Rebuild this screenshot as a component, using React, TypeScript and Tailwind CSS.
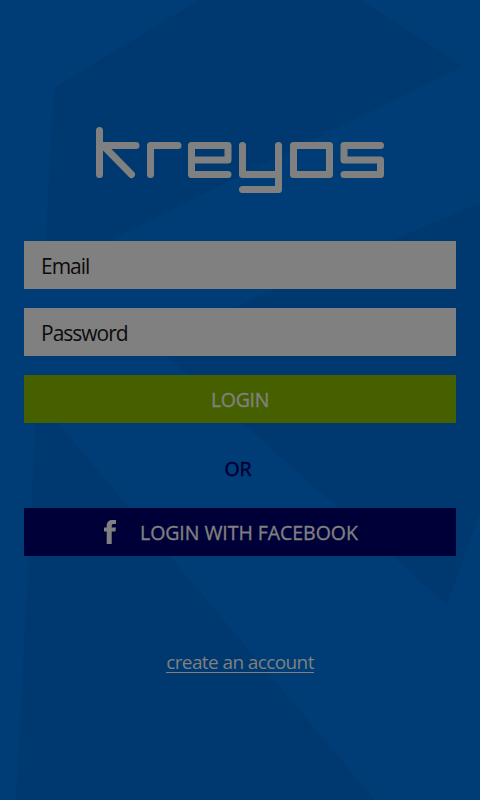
import React from "react";

const field =
  "h-12 w-full bg-[#808080] px-[17px] pt-px text-[21px] text-[#0c0c0c] placeholder-[#0c0c0c] outline-none tracking-[-1px]";

function Backdrop() {
  return (
    <svg className="absolute inset-0 -z-10" width="480" height="800" viewBox="0 0 480 800" aria-hidden="true">
      <rect width="480" height="800" fill="#003d76" />
      <g fill="#00396f">
        <path d="M199 0H361L463 66L114 238L44 272L54 88Z" />
        <path d="M480 203L393 240L151 342L447 605L480 512Z" />
        <path d="M37 398L375 800H16Z" />
      </g>
    </svg>
  );
}

function Logo() {
  return (
    <svg
      className="h-[67px] w-[290px]"
      viewBox="95 126 290 67"
      fill="none"
      stroke="#808080"
      strokeWidth="7"
      strokeLinecap="round"
      strokeLinejoin="round"
      role="img"
      aria-label="kreyos"
    >
      <path d="M99.5 130.5V174.5M99.5 145.5H136M104 146.5L131.5 174.5" />
      <path d="M150.5 174.5V145.5H178" />
      <path d="M191.5 160H228V145.5H191.5V174.5H228" />
      <path d="M242.5 145.5V174.5H278.5M278.5 145.5V189.5H242.5" />
      <path d="M293.5 145.5H329.5V174.5H293.5Z" />
      <path d="M380.5 145.5H344V160H380.5V174.5H344" />
    </svg>
  );
}

export default function App() {
  return (
    <main className="relative isolate flex h-[800px] w-[480px] flex-col items-center overflow-hidden px-6 pt-[126px] font-['Open_Sans','Noto_Sans',sans-serif]">
      <Backdrop />
      <Logo />
      <form className="mt-12 flex w-full flex-col gap-[19px]" onSubmit={(e) => e.preventDefault()}>
        <input className={field} type="text" placeholder="Email" />
        <input className={field} type="text" placeholder="Password" />
        <button className="h-12 w-full bg-[#466000] pt-px text-[19.5px] tracking-[-0.3px] text-[#808080] [-webkit-text-stroke:0.35px]">
          LOGIN
        </button>
      </form>
      <p className="mt-8 h-[53px] pr-1 text-[19.5px] leading-[28px] text-[#000038] [-webkit-text-stroke:0.5px]">OR</p>
      <button className="flex h-12 w-full items-center bg-[#000038] pl-[80px] text-[19.5px] tracking-[-0.05px] text-[#808080] [-webkit-text-stroke:0.35px]">
        <svg className="mr-6 h-6 w-3" viewBox="0 0 12 24" fill="#808080" aria-hidden="true">
          <path d="M12 0H8.5C5 0 2.7 2 2.7 5.5V7.5H0V11.5H2.7V24H7.7V11.5H11.4L12 7.5H7.7V6C7.7 4.8 8.2 4 9.5 4H12Z" />
        </svg>
        <span className="pt-0.5">LOGIN WITH FACEBOOK</span>
      </button>
      <a
        className="mt-[96px] border-b border-[#808080] text-[19px] leading-[20px] tracking-[-0.6px] text-[#808080]"
        href="#create"
      >
        create an account
      </a>
    </main>
  );
}
